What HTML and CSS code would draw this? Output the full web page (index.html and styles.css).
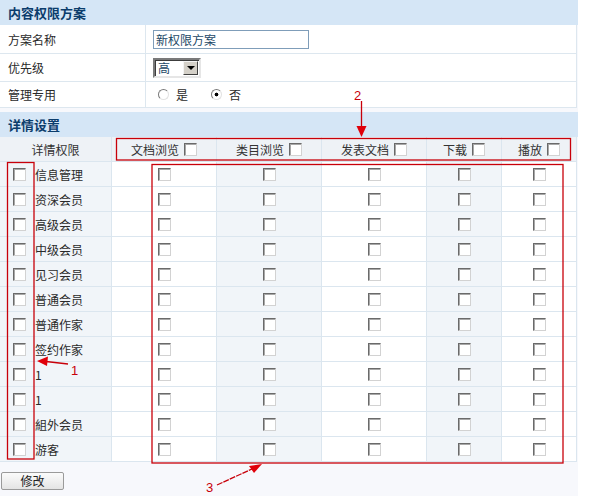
FILE: index.html
```html
<!DOCTYPE html>
<html lang="zh">
<head>
<meta charset="utf-8">
<title>内容权限方案</title>
<link rel="stylesheet" href="styles.css">
</head>
<body>
<div class="page">
  <div class="sec-title">内容权限方案</div>
  <div class="form">
    <div class="frow r1">
      <div class="flabel">方案名称</div>
      <div class="fval"><input class="txt" type="text" value="新权限方案"></div>
    </div>
    <div class="frow r2">
      <div class="flabel">优先级</div>
      <div class="fval">
        <div class="sel"><span class="sel-text">高</span><span class="sel-btn"><span class="tri"></span></span></div>
      </div>
    </div>
    <div class="frow r3">
      <div class="flabel">管理专用</div>
      <div class="fval radios">
        <label class="ropt"><input class="rd" type="radio" name="m">是</label>
        <label class="ropt"><input class="rd" type="radio" name="m" checked>否</label>
      </div>
    </div>
  </div>

  <div class="sec-title sec2">详情设置</div>
  <div class="grid">
    <div class="grow ghead">
      <div class="gc c0">详情权限</div>
      <div class="gc">文档浏览<input class="cb" type="checkbox"></div>
      <div class="gc">类目浏览<input class="cb" type="checkbox"></div>
      <div class="gc">发表文档<input class="cb" type="checkbox"></div>
      <div class="gc">下载<input class="cb" type="checkbox"></div>
      <div class="gc">播放<input class="cb" type="checkbox"></div>
    </div>
    <div class="grow"><div class="gc c0"><input class="cb" type="checkbox"><span>信息管理</span></div><div class="gc"><input class="cb" type="checkbox"></div><div class="gc t"><input class="cb" type="checkbox"></div><div class="gc"><input class="cb" type="checkbox"></div><div class="gc t"><input class="cb" type="checkbox"></div><div class="gc"><input class="cb" type="checkbox"></div></div>
    <div class="grow"><div class="gc c0"><input class="cb" type="checkbox"><span>资深会员</span></div><div class="gc"><input class="cb" type="checkbox"></div><div class="gc t"><input class="cb" type="checkbox"></div><div class="gc"><input class="cb" type="checkbox"></div><div class="gc t"><input class="cb" type="checkbox"></div><div class="gc"><input class="cb" type="checkbox"></div></div>
    <div class="grow"><div class="gc c0"><input class="cb" type="checkbox"><span>高级会员</span></div><div class="gc"><input class="cb" type="checkbox"></div><div class="gc t"><input class="cb" type="checkbox"></div><div class="gc"><input class="cb" type="checkbox"></div><div class="gc t"><input class="cb" type="checkbox"></div><div class="gc"><input class="cb" type="checkbox"></div></div>
    <div class="grow"><div class="gc c0"><input class="cb" type="checkbox"><span>中级会员</span></div><div class="gc"><input class="cb" type="checkbox"></div><div class="gc t"><input class="cb" type="checkbox"></div><div class="gc"><input class="cb" type="checkbox"></div><div class="gc t"><input class="cb" type="checkbox"></div><div class="gc"><input class="cb" type="checkbox"></div></div>
    <div class="grow"><div class="gc c0"><input class="cb" type="checkbox"><span>见习会员</span></div><div class="gc"><input class="cb" type="checkbox"></div><div class="gc t"><input class="cb" type="checkbox"></div><div class="gc"><input class="cb" type="checkbox"></div><div class="gc t"><input class="cb" type="checkbox"></div><div class="gc"><input class="cb" type="checkbox"></div></div>
    <div class="grow"><div class="gc c0"><input class="cb" type="checkbox"><span>普通会员</span></div><div class="gc"><input class="cb" type="checkbox"></div><div class="gc t"><input class="cb" type="checkbox"></div><div class="gc"><input class="cb" type="checkbox"></div><div class="gc t"><input class="cb" type="checkbox"></div><div class="gc"><input class="cb" type="checkbox"></div></div>
    <div class="grow"><div class="gc c0"><input class="cb" type="checkbox"><span>普通作家</span></div><div class="gc"><input class="cb" type="checkbox"></div><div class="gc t"><input class="cb" type="checkbox"></div><div class="gc"><input class="cb" type="checkbox"></div><div class="gc t"><input class="cb" type="checkbox"></div><div class="gc"><input class="cb" type="checkbox"></div></div>
    <div class="grow"><div class="gc c0"><input class="cb" type="checkbox"><span>签约作家</span></div><div class="gc"><input class="cb" type="checkbox"></div><div class="gc t"><input class="cb" type="checkbox"></div><div class="gc"><input class="cb" type="checkbox"></div><div class="gc t"><input class="cb" type="checkbox"></div><div class="gc"><input class="cb" type="checkbox"></div></div>
    <div class="grow"><div class="gc c0"><input class="cb" type="checkbox"><span>1</span></div><div class="gc"><input class="cb" type="checkbox"></div><div class="gc t"><input class="cb" type="checkbox"></div><div class="gc"><input class="cb" type="checkbox"></div><div class="gc t"><input class="cb" type="checkbox"></div><div class="gc"><input class="cb" type="checkbox"></div></div>
    <div class="grow"><div class="gc c0"><input class="cb" type="checkbox"><span>1</span></div><div class="gc"><input class="cb" type="checkbox"></div><div class="gc t"><input class="cb" type="checkbox"></div><div class="gc"><input class="cb" type="checkbox"></div><div class="gc t"><input class="cb" type="checkbox"></div><div class="gc"><input class="cb" type="checkbox"></div></div>
    <div class="grow"><div class="gc c0"><input class="cb" type="checkbox"><span>組外会员</span></div><div class="gc"><input class="cb" type="checkbox"></div><div class="gc t"><input class="cb" type="checkbox"></div><div class="gc"><input class="cb" type="checkbox"></div><div class="gc t"><input class="cb" type="checkbox"></div><div class="gc"><input class="cb" type="checkbox"></div></div>
    <div class="grow"><div class="gc c0"><input class="cb" type="checkbox"><span>游客</span></div><div class="gc"><input class="cb" type="checkbox"></div><div class="gc t"><input class="cb" type="checkbox"></div><div class="gc"><input class="cb" type="checkbox"></div><div class="gc t"><input class="cb" type="checkbox"></div><div class="gc"><input class="cb" type="checkbox"></div></div>
  </div>
  <div class="actions"><button class="btn" type="button">修改</button></div>

  <svg class="notes" width="592" height="496" viewBox="0 0 592 496">
    <g fill="none" stroke="#c8000a" stroke-width="1.3">
      <rect x="7.5" y="162.5" width="26.5" height="296.5"/>
      <rect x="116.5" y="138.5" width="454" height="21.5"/>
      <rect x="152" y="164.5" width="411" height="298.5"/>
      <line x1="361.5" y1="101" x2="361.5" y2="128"/>
      <line x1="68" y1="364" x2="46" y2="361.5"/>
      <line x1="217" y1="485" x2="252" y2="469" stroke-dasharray="6 1"/>
    </g>
    <g fill="#e0000a">
      <polygon points="356.5,126 366.5,126 361.5,137"/>
      <polygon points="37,361 48,356.5 47,366"/>
      <polygon points="262,464 249,466 254,473"/>
    </g>
    <g class="num">
      <text x="354" y="100">2</text>
      <text x="71" y="375">1</text>
      <text x="206" y="492">3</text>
    </g>
  </svg>
</div>
</body>
</html>
```
FILE: styles.css
```css
* { box-sizing: border-box; }

body {
  margin: 0;
  background: #ffffff;
  font-family: "Noto Sans CJK SC", "Noto Sans", sans-serif;
  font-size: 12px;
  color: #2a2a2a;
}

.page {
  position: relative;
  width: 578px;
  min-height: 496px;
  background: #f7f8fc;
}

.sec-title {
  height: 25px;
  line-height: 25px;
  padding-left: 8px;
  background: #d5e6f6;
  color: #0c3d6c;
  font-weight: bold;
  font-size: 13px;
}

.sec2 { margin-top: 4px; }

.form {
  width: 577px;
  background: #ffffff;
  border-right: 1px solid #dde7ef;
}

.frow {
  display: grid;
  grid-template-columns: 146px 1fr;
  border-bottom: 1px solid #dde7ef;
}
.r1 { height: 29px; }
.r2 { height: 28px; }
.r3 { height: 26px; }

.flabel {
  display: flex;
  align-items: center;
  padding-left: 8px;
  border-right: 1px solid #dde7ef;
  color: #2a2a2a;
}

.fval {
  display: flex;
  align-items: center;
  padding-left: 7px;
}

.txt {
  width: 156px;
  height: 19px;
  margin: 0;
  padding: 0 2px;
  border: 1px solid #7f9db9;
  font-family: inherit;
  font-size: 12px;
  color: #1c4766;
  background: #fff;
  outline: none;
}

.sel {
  display: flex;
  width: 48px;
  height: 20px;
  border: 2px solid;
  border-color: #7a7a7a #e6e6e6 #e6e6e6 #7a7a7a;
  box-shadow: inset 1px 1px 0 #3c3c3c;
  background: #fff;
}
.sel-text {
  flex: 1;
  padding-left: 3px;
  line-height: 16px;
  color: #1c4766;
}
.sel-btn {
  width: 15px;
  display: flex;
  align-items: center;
  justify-content: center;
  margin: 1px 1px 1px 0;
  background: #d4d0c8;
  border: 1px solid;
  border-color: #f4f4f4 #404040 #404040 #f4f4f4;
}
.tri {
  width: 0;
  height: 0;
  border-left: 4px solid transparent;
  border-right: 4px solid transparent;
  border-top: 4px solid #000;
}

.radios { padding-left: 12px; gap: 23px; }
.ropt {
  display: flex;
  align-items: center;
  gap: 7px;
}
.rd {
  appearance: none;
  -webkit-appearance: none;
  width: 11px;
  height: 11px;
  margin: 0;
  border-radius: 50%;
  border: 1px solid;
  border-color: #7a7a7a #e2e2e2 #e2e2e2 #7a7a7a;
  background: #fff;
}
.rd:checked {
  background: radial-gradient(circle, #000 0, #000 1.6px, #fff 2.2px);
}

.grid {
  width: 577px;
  background: #ffffff;
}

.grow {
  display: grid;
  grid-template-columns: 112px 105px 105px 105px 75px 75px;
  height: 25px;
  border-bottom: 1px solid #dbe6ef;
}

.gc {
  display: flex;
  align-items: center;
  justify-content: center;
  gap: 5px;
  border-right: 1px solid #dbe6ef;
}

.ghead { background: #eef2f6; }
.ghead .gc { color: #333; }

.grow .c0 { justify-content: flex-start; padding-left: 13px; gap: 9px; }
.ghead .c0 { justify-content: center; padding-left: 0; }
.grow:not(.ghead) .c0,
.grow:not(.ghead) .t { background: #f1f5f9; }

.cb {
  appearance: none;
  -webkit-appearance: none;
  width: 13px;
  height: 13px;
  margin: 0;
  flex: none;
  border: 1px solid;
  border-color: #6a6a6a #d2d2d2 #d2d2d2 #6a6a6a;
  box-shadow: inset 1px 1px 0 #a8a8a8;
  background: #fff;
}

.actions {
  padding: 10px 0 0 1px;
}

.btn {
  width: 63px;
  height: 18px;
  padding: 0;
  border: 1px solid #9a9a9a;
  border-radius: 2px;
  background: linear-gradient(#fbfbfb, #e4e4e4);
  font-family: inherit;
  font-size: 12px;
  color: #222;
  line-height: 16px;
}

.notes {
  position: absolute;
  top: 0;
  left: 0;
  pointer-events: none;
  overflow: visible;
}
.num text {
  font-family: "Liberation Sans", sans-serif;
  font-size: 13px;
  fill: #c8000a;
}
```
